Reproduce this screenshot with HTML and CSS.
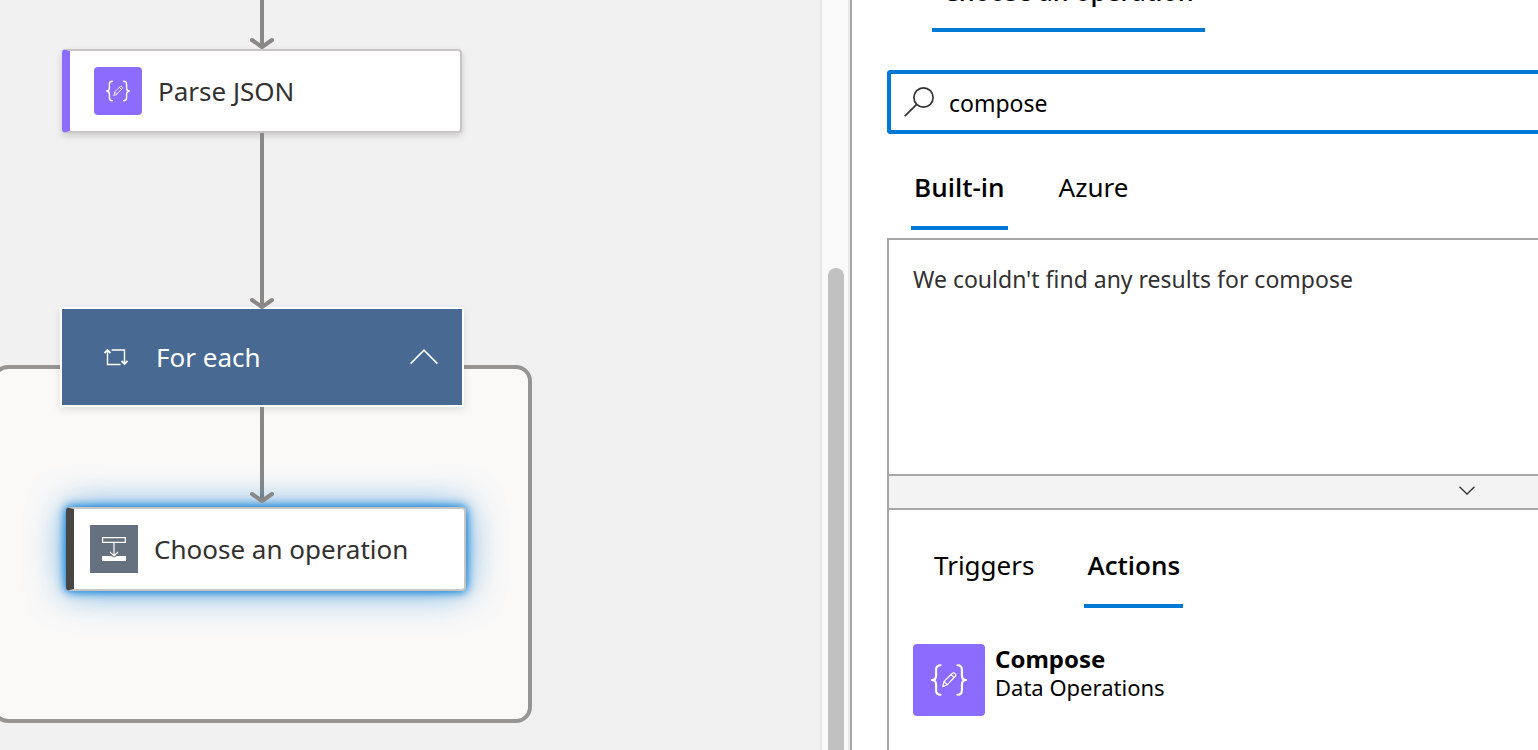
FILE: index.html
```html
<!DOCTYPE html>
<html lang="en">
<head>
<meta charset="utf-8">
<title>Logic app designer</title>
<link rel="stylesheet" href="styles.css">
</head>
<body>
<svg class="defs" aria-hidden="true">
  <symbol id="data-operations" viewBox="0 0 48 48">
    <g fill="none" stroke="#fff" stroke-linecap="round" stroke-linejoin="round">
      <path stroke-width="1.4" d="M18.4 14.2C16 14.2 15.4 15.4 15.4 17.2V20.8C15.4 22.8 14.6 24 12.6 24C14.6 24 15.4 25.2 15.4 27.2V30.8C15.4 32.6 16 33.8 18.4 33.8M29.6 14.2C32 14.2 32.6 15.4 32.6 17.2V20.8C32.6 22.8 33.4 24 35.4 24C33.4 24 32.6 25.2 32.6 27.2V30.8C32.6 32.6 32 33.8 29.6 33.8"/>
      <path stroke-width=".8" d="M19.8 28.4L20.7 24.9L26.3 19.5Q27.2 18.8 28.1 19.7Q29 20.6 28.2 21.5L22.8 27.2ZM20.7 24.9L22.8 27.2M25.4 20.4L27.4 22.4"/>
    </g>
  </symbol>
</svg>
<div class="designer">
  <main class="canvas">
    <section class="scope" aria-label="For each scope"></section>
    <div class="card card-parse">
      <svg class="card-icon card-icon-data" viewBox="0 0 48 48"><use href="#data-operations"/></svg>
      <span>Parse JSON</span>
    </div>
    <div class="loop">
      <svg class="loop-icon" viewBox="0 0 24 20" fill="none" stroke="#fff" stroke-width="1.4"><path d="M3.5 3V17.5H16.5M7.5 3H20.5V17"/><path stroke-width="1.8" d="M.6 6L3.5 3L6.4 6M17.6 14L20.5 17L23.4 14"/></svg>
      <span class="loop-title">For each</span>
      <button class="icon-button" aria-label="Collapse"><svg width="28" height="16" viewBox="0 0 28 16" fill="none" stroke="#fff" stroke-width="1.6"><path d="M.6 14.6L14 1.2L27.4 14.6"/></svg></button>
    </div>
    <svg class="edge edge-in" width="24" height="50" viewBox="0 0 24 50"><path class="edge-line" d="M12 0V47"/><path class="edge-head" d="M2 40L12 47L22 40"/></svg>
    <svg class="edge edge-loop" width="24" height="177" viewBox="0 0 24 177"><path class="edge-line" d="M12 0V174"/><path class="edge-head" d="M2 167L12 174L22 167"/></svg>
    <svg class="edge edge-child" width="24" height="98" viewBox="0 0 24 98"><path class="edge-line" d="M12 0V94"/></svg>
    <div class="card card-choose">
      <svg class="card-icon card-icon-operation" viewBox="0 0 48 48" fill="none" stroke="#fff"><path stroke-width="1.2" d="M12.6 12.6H35.4V17.4H12.6ZM24 18V30M20 27L24 31L28 27"/><path fill="#fff" stroke="none" d="M12 31H21L24 32.6L27 31H36V36H12Z"/></svg>
      <span>Choose an operation</span>
    </div>
    <svg class="edge edge-child" width="24" height="98" viewBox="0 0 24 98"><path class="edge-head" d="M2 87L12 94L22 87"/></svg>
  </main>
  <div class="scrollbar"><div class="thumb"></div></div>
  <aside class="panel">
    <nav class="tabs tabs-title"><button class="tab tab-wide tab-active">Choose an operation</button></nav>
    <label class="search">
      <svg width="30" height="30" viewBox="0 0 30 30" fill="none" stroke="#333" stroke-width="1.7"><circle cx="19.5" cy="10.5" r="9.6"/><path d="M12.7 17.3L.8 29.2"/></svg>
      <input type="text" value="compose" aria-label="Search connectors and actions">
    </label>
    <nav class="tabs tabs-source"><button class="tab tab-active">Built-in</button><button class="tab">Azure</button></nav>
    <section class="results">
      <p class="empty">We couldn't find any results for compose</p>
      <button class="expander" aria-label="Expand"><svg width="16" height="10" viewBox="0 0 16 10" fill="none" stroke="#333" stroke-width="1.3"><path d="M.5 .7L8 8L15.5 .7"/></svg></button>
      <nav class="tabs tabs-kind"><button class="tab">Triggers</button><button class="tab tab-active">Actions</button></nav>
      <button class="action">
        <svg class="action-icon" viewBox="0 0 48 48"><use href="#data-operations"/></svg>
        <span class="action-text"><strong>Compose</strong><span>Data Operations</span></span>
      </button>
    </section>
  </aside>
</div>
</body>
</html>
```
FILE: styles.css
```css
* { box-sizing: border-box; }

body {
  margin: 0;
  font-family: "Noto Sans", "Open Sans", sans-serif;
  font-size: 26px;
  line-height: 36px;
  color: #323130;
}

button, input { font: inherit; color: inherit; }
button { margin: 0; padding: 0; border: 0; background: none; text-align: left; }
svg { display: block; flex: none; }
.defs { position: absolute; width: 0; height: 0; }

.designer {
  display: grid;
  grid-template-columns: 820fr 30px 688fr;
  height: 100vh;
  overflow: hidden;
}

/* Workflow canvas */
.canvas { position: relative; overflow: hidden; background: #f1f1f1; }

.scope {
  position: absolute;
  left: -8px;
  top: 365px;
  width: 540px;
  height: 358px;
  border: 4px solid #979593;
  border-radius: 16px;
  background: #faf9f8;
}

.edge { position: absolute; left: 250px; fill: none; stroke: #8a8886; stroke-width: 4; }
.edge-head { stroke-linecap: round; stroke-linejoin: round; }
.edge-in { top: 0; }
.edge-loop { top: 133px; }
.edge-child { top: 407px; }

.card {
  position: absolute;
  display: flex;
  align-items: center;
  gap: 16px;
  width: 400px;
  height: 84px;
  border: 2px solid #c8c6c4;
  border-left-width: 8px;
  border-radius: 4px;
  background: #fff;
}
.card-parse {
  left: 62px;
  top: 49px;
  padding-left: 24px;
  border-left-color: #8c6cff;
  box-shadow: 0 3px 7px rgba(0, 0, 0, .16);
}
.card-choose {
  left: 66px;
  top: 507px;
  padding-left: 16px;
  border-left-color: #484644;
  box-shadow: 0 0 10px 1px #0078d4, 0 0 36px rgba(0, 120, 212, .65);
}
.card-icon { width: 48px; height: 48px; }
.card-icon-data { border-radius: 4px; background: #8c6cff; }
.card-icon-operation { background: #65717e; }

.loop {
  position: absolute;
  left: 60px;
  top: 307px;
  display: flex;
  align-items: center;
  width: 404px;
  height: 100px;
  padding: 0 24px 0 42px;
  border: 2px solid #fff;
  background: #486991;
  color: #fff;
  box-shadow: 0 3px 8px rgba(0, 0, 0, .1);
}
.loop-icon { width: 24px; height: 20px; }
.loop-title { flex: 1; margin-left: 28px; }

/* Scroll track between canvas and panel */
.scrollbar {
  padding: 268px 4px 0 6px;
  border: solid #e8e8e8;
  border-width: 0 2px;
  background: #fafafa;
}
.thumb { width: 16px; height: 100%; border-radius: 8px 8px 0 0; background: #c1c1c1; }

/* Operation panel */
.panel {
  display: flex;
  flex-direction: column;
  min-width: 0;
  padding-left: 35px;
  border-left: 2px solid #a6a6a6;
  background: #fff;
  color: #000;
}

.tabs { display: flex; flex: none; }
.tab { height: 60px; padding: 0 3px 22px; border-bottom: 4px solid transparent; line-height: 34px; white-space: nowrap; }
.tab-active { border-color: #0078d4; font-family: "Open Sans", "Noto Sans", sans-serif; font-weight: 600; }
.tab-wide { height: 58px; padding: 0 11px 20px; font-size: 25px; }
.tabs-title { margin: -26px 0 38px 45px; }
.tabs-source { gap: 48px; margin: 36px 0 8px 24px; }
.tabs-kind { gap: 47px; margin: 38px 0 36px 42px; }

.search {
  display: flex;
  flex: none;
  gap: 15px;
  height: 64px;
  padding: 13px 0 0 13px;
  border: 4px solid #0078d4;
  border-right: 0;
  border-radius: 4px 0 0 4px;
}
.search input {
  flex: 1;
  min-width: 0;
  height: 32px;
  padding: 0;
  border: 0;
  outline: 0;
  background: none;
  font-size: 23px;
}

.results {
  display: flex;
  flex: 1;
  flex-direction: column;
  border: solid #a6a6a6;
  border-width: 2px 0 0 2px;
}
.empty { height: 234px; margin: 0; padding: 21px 24px; font-size: 23px; color: #323130; }
.expander {
  display: flex;
  justify-content: flex-end;
  flex: none;
  height: 36px;
  padding: 10px 63px 0 0;
  border: solid #a6a6a6;
  border-width: 2px 0;
  background: #f3f3f3;
}
.action { display: flex; gap: 10px; margin-left: 24px; font-size: 22px; line-height: 29px; }
.action strong { font-size: 24px; }
.action-icon { width: 72px; height: 72px; border-radius: 4px; background: #8c6cff; }
.action-text { display: flex; flex-direction: column; }
```
